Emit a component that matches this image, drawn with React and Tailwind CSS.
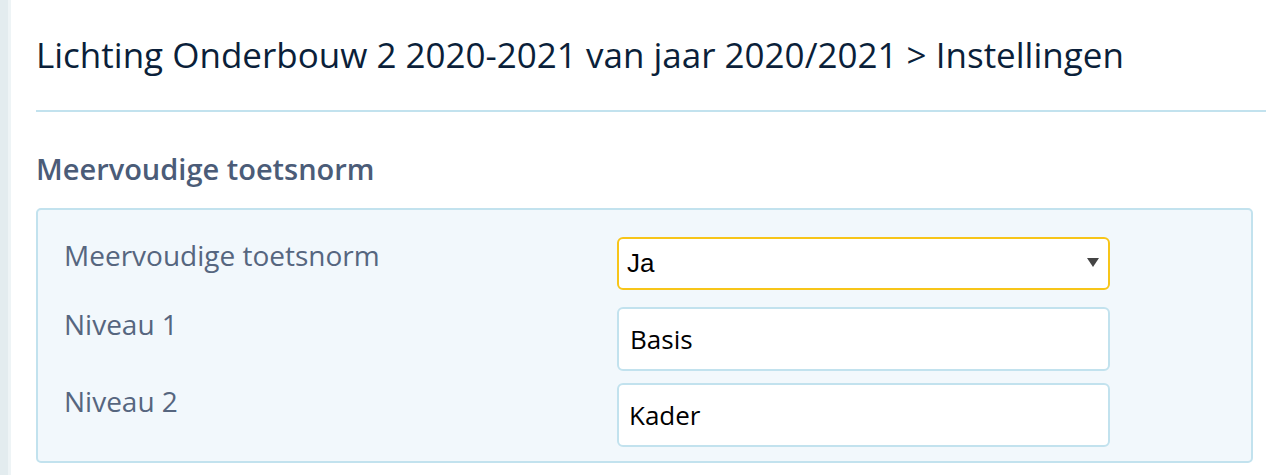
export default function App() {
  return (
    <div className="flex min-h-[475px] w-[1266px] bg-white" style={{ fontFamily: '"Open Sans", sans-serif' }}>
      <div className="w-[8px] shrink-0 bg-[#e3ecef] border-r-[3px] border-[#eef4f6] box-content" />
      <div className="flex-1 pl-[25px]">
        <h1 className="pt-[31px] pb-[31px] text-[35px] leading-[48px] text-[#0b1f3a] font-normal">
          Lichting Onderbouw 2 2020-2021 van jaar 2020/2021 &gt; Instellingen
        </h1>
        <div className="h-[2px] bg-[#c2e2ee]" />
        <h2 className="mt-[39px] text-[29px] leading-[36px] font-semibold text-[#4b5c78]">Meervoudige toetsnorm</h2>
        <div className="mt-[21px] mr-[13px] rounded-[5px] border-2 border-[#c2e2ee] bg-[#f2f8fc] pl-[26px] pr-[141px] pt-[27px] pb-[14px]">
          <div className="flex">
            <div className="w-[553px] shrink-0 text-[28px] leading-[36px] text-[#56667f]">Meervoudige toetsnorm</div>
            <div className="relative h-[53px] flex-1 rounded-[6px] border-2 border-[#f7c519] bg-white">
              <span className="absolute left-[8px] top-[8px] text-[26px] leading-[32px] text-black" style={{ fontFamily: '"Liberation Sans", Arial, sans-serif' }}>Ja</span>
              <svg className="absolute right-[9px] top-[19px]" width="12" height="9" viewBox="0 0 12 9"><path d="M0 0h12L6 9z" fill="#444" /></svg>
            </div>
          </div>
          <div className="mt-[17px] flex">
            <div className="w-[553px] shrink-0 -mt-[1px] text-[28px] leading-[36px] text-[#56667f]">Niveau 1</div>
            <div className="flex h-[64px] flex-1 items-center rounded-[6px] border-2 border-[#c2e2ee] bg-white px-[11px] text-[26px] text-black">Basis</div>
          </div>
          <div className="mt-[12px] flex">
            <div className="w-[553px] shrink-0 text-[28px] leading-[36px] text-[#56667f]">Niveau 2</div>
            <div className="flex h-[64px] flex-1 items-center rounded-[6px] border-2 border-[#c2e2ee] bg-white px-[10px] text-[26px] text-black">Kader</div>
          </div>
        </div>
      </div>
    </div>
  );
}
